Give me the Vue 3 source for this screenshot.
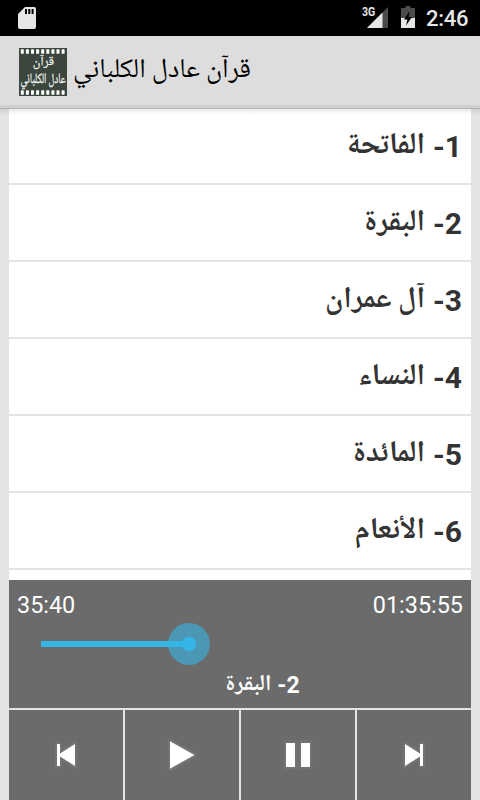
<template>
  <div class="screen">
    <div class="status-bar">
      <svg class="sd-icon" width="18" height="22" viewBox="0 0 18 22">
        <path d="M7 0H16Q18 0 18 2V20Q18 22 16 22H2Q0 22 0 20V7Z" fill="#e6e6e6" />
        <path d="M7 2H9V7H7ZM10.3 2H12.3V7H10.3ZM13.6 2H15.6V7H13.6Z" fill="#000" />
      </svg>
      <div class="status-right">
        <span class="network">3G</span>
        <svg class="signal-icon" width="21" height="21" viewBox="0 0 21 21">
          <path d="M21 0V21H0Z" fill="#4b4b4b" />
          <path d="M15.5 5.5V21H0Z" fill="#e6e6e6" />
        </svg>
        <svg class="battery-icon" width="14" height="22" viewBox="0 0 14 22">
          <path d="M0 2H4.5V0H9.5V2H14V22H0Z" fill="#4b4b4b" />
          <path d="M0 12H14V22H0Z" fill="#e6e6e6" />
          <path d="M8.7 5L3 13.4H6.4L5 19.5L11 11H7.5Z" fill="#000" />
        </svg>
        <span class="clock">2:46</span>
      </div>
    </div>

    <header class="action-bar">
      <svg class="app-icon" width="48" height="48" viewBox="0 0 48 48">
        <rect width="48" height="48" fill="#3b463d" />
        <g fill="#fff">
          <rect v-for="n in 9" :key="'t' + n" :x="n * 5.1 - 3.3" y="1.2" width="3" height="4.6" rx="0.6" />
          <rect v-for="n in 9" :key="'b' + n" :x="n * 5.1 - 3.3" y="42.2" width="3" height="4.6" rx="0.6" />
        </g>
        <text class="icon-top" x="24.5" y="18.8" text-anchor="middle">قرآن</text>
        <text class="icon-bottom" transform="translate(24 36.8) scale(1 1.5)" text-anchor="middle">عادل الكلباني</text>
      </svg>
      <h1 class="app-title" dir="rtl">قرآن عادل الكلباني</h1>
    </header>

    <main class="content">
      <ul class="sura-list">
        <li v-for="sura in suras" :key="sura.number" class="sura" dir="rtl">
          <span class="sura-number" dir="ltr">-{{ sura.number }}</span>
          <span class="sura-name">{{ sura.name }}</span>
        </li>
      </ul>

      <section class="player">
        <div class="times">
          <span>35:40</span>
          <span>01:35:55</span>
        </div>
        <div class="seek">
          <div class="seek-progress" :style="{ width: progress + '%' }">
            <span class="thumb"></span>
          </div>
          <div class="seek-rest"></div>
        </div>
        <div class="now-playing" dir="rtl">
          <span class="now-number" dir="ltr">-2</span>
          <span class="now-name">البقرة</span>
        </div>
      </section>

      <nav class="controls">
        <button v-for="c in controls" :key="c.name" class="control" :aria-label="c.name">
          <svg width="48" height="48" viewBox="0 0 48 48">
            <path :d="c.path" class="glow" />
            <path :d="c.path" fill="#fff" />
          </svg>
        </button>
      </nav>
    </main>
  </div>
</template>

<script setup>
import { ref } from 'vue';

const suras = [
  { number: 1, name: 'الفاتحة' },
  { number: 2, name: 'البقرة' },
  { number: 3, name: 'آل عمران' },
  { number: 4, name: 'النساء' },
  { number: 5, name: 'المائدة' },
  { number: 6, name: 'الأنعام' },
];

const progress = ref(37.2);

const controls = [
  { name: 'previous', path: 'M15 13H18V22.6L33 13V35L18 25.4V35H15Z' },
  { name: 'play', path: 'M12 10.3L36.5 24L12 37.7Z' },
  { name: 'pause', path: 'M12 12H21V36H12ZM27 12H36V36H27Z' },
  { name: 'next', path: 'M15 13L30 22.6V13H33V35H30V25.4L15 35Z' },
];
</script>

<style>
body {
  background: #e4e4e4;
  overflow: hidden;
}
</style>

<style scoped>
.screen {
  --arabic: "Noto Naskh Arabic UI", "Noto Naskh Arabic", "Noto Sans Arabic", "DejaVu Sans", sans-serif;
  width: 480px;
  height: 800px;
  display: flex;
  flex-direction: column;
  overflow: hidden;
  background: #e4e4e4;
  font-family: Roboto, "DejaVu Sans", sans-serif;
}

.status-bar {
  height: 36px;
  flex: none;
  box-sizing: border-box;
  padding: 0 12px 0 18px;
  display: flex;
  justify-content: space-between;
  background: #000;
  color: #e6e6e6;
}

.sd-icon {
  margin-top: 7px;
}

.status-right {
  display: flex;
}

.network {
  margin-top: 6px;
  font-size: 12px;
  line-height: 13px;
  font-weight: 700;
  width: 5px;
  transform: scaleX(0.88);
  transform-origin: left;
}

.signal-icon {
  margin-top: 7px;
}

.battery-icon {
  margin: 6px 11px 0 13px;
}

.clock {
  font-size: 22px;
  line-height: 38px;
  font-weight: 500;
  letter-spacing: -0.3px;
  width: 42px;
  white-space: nowrap;
}

.action-bar {
  height: 72px;
  flex: none;
  box-sizing: border-box;
  padding: 0 19px 0 19px;
  display: flex;
  align-items: center;
  background: linear-gradient(#ddd 69px, #cfcfcf 69px);
}

.app-icon text {
  fill: #f4f4f4;
  stroke: #f4f4f4;
  stroke-width: 0.2px;
  font-family: var(--arabic);
}

.icon-top {
  font-size: 13px;
}

.icon-bottom {
  font-size: 9.7px;
}

.app-title {
  margin: 0 0 2px 6px;
  color: #000;
  font-family: var(--arabic);
  font-size: 27.3px;
  font-weight: 400;
  line-height: 40px;
  white-space: nowrap;
}

.content {
  flex: 1;
  min-height: 0;
  display: flex;
  flex-direction: column;
  padding: 0 9px;
  background: linear-gradient(#b3b3b3 1px, #cfcfcf 1px, #e4e4e4 7px);
}

.sura-list {
  flex: 1;
  min-height: 0;
  margin: 0;
  padding: 0;
  overflow: hidden;
  list-style: none;
  background: linear-gradient(#b3b3b3 1px, #ececec 1px, #fff 7px);
}

.sura {
  height: 75px;
  padding: 0 9px;
  border-bottom: 2px solid #e4e4e4;
  display: flex;
  align-items: baseline;
  gap: 8px;
  color: #333;
  font-weight: 700;
  line-height: 76px;
}

.sura-number {
  font-size: 30px;
}

.sura-name {
  font-family: var(--arabic);
  font-size: 30px;
}

.player {
  height: 128px;
  flex: none;
  background: #6b6b6b;
  color: #fff;
}

.times {
  display: flex;
  justify-content: space-between;
  padding: 11px 8px 0;
  font-size: 23.4px;
  line-height: 29px;
}

.seek {
  height: 48px;
  padding: 0 32px;
  display: flex;
  align-items: center;
}

.seek-progress {
  height: 6px;
  position: relative;
  background: #33b5e5;
}

.seek-rest {
  flex: 1;
  height: 1px;
  background: #686868;
}

.thumb {
  position: absolute;
  right: -21px;
  top: -18px;
  width: 42px;
  height: 42px;
  border-radius: 50%;
  background: radial-gradient(#33b5e5 6.5px, transparent 7.5px), rgba(51, 181, 229, 0.6);
}

.now-playing {
  display: flex;
  justify-content: center;
  align-items: baseline;
  gap: 6px;
  padding-left: 45px;
  font-weight: 700;
  line-height: 33px;
}

.now-number {
  font-size: 23px;
}

.now-name {
  font-family: var(--arabic);
  font-size: 22.7px;
}

.controls {
  height: 90px;
  flex: none;
  display: grid;
  grid-template-columns: repeat(4, 1fr);
  gap: 2px;
  padding-top: 2px;
  background: #e4e4e4;
}

.control {
  display: flex;
  align-items: center;
  justify-content: center;
  padding: 0;
  border: 0;
  background: #6b6b6b;
}

.glow {
  fill: none;
  stroke: #737373;
  stroke-width: 5;
  stroke-linejoin: round;
}
</style>
